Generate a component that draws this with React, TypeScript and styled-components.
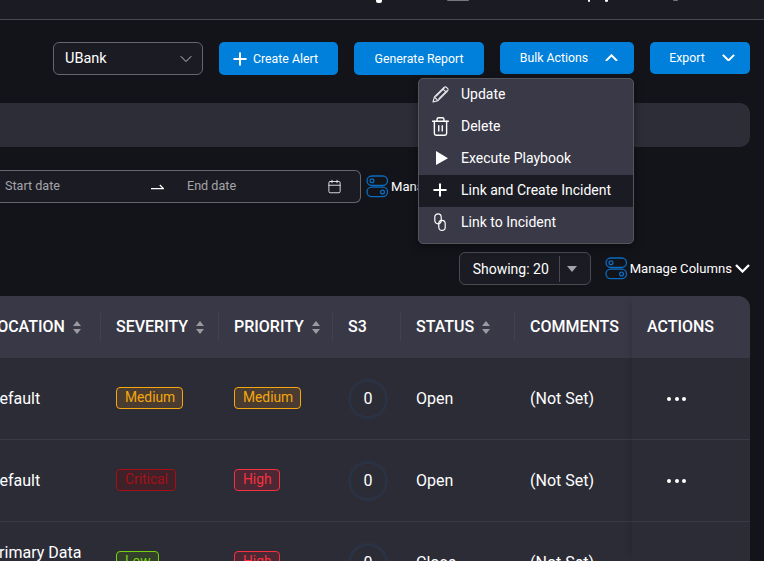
import React from "react";
import styled, { createGlobalStyle } from "styled-components";
import { ChevronDown, Plus, Trash2, Calendar } from "lucide-react";

const GlobalStyle = createGlobalStyle`
  html, body {
    margin: 0;
    padding: 0;
    background: #13141a;
    overflow: hidden;
  }
  * {
    box-sizing: border-box;
  }
`;

const Page = styled.div`
  width: 764px;
  height: 561px;
  overflow: hidden;
  background: #13141a;
  color: #fff;
  font-family: Roboto, "Liberation Sans", sans-serif;
  font-size: 16px;
`;

const TopBar = styled.div`
  height: 20px;
  display: flex;
  align-items: flex-start;
  background: #1b1c23;
  border-bottom: 1px solid #4a4a50;
`;

const TopMark = styled.span<{ $before: number; $width: number; $height: number; $color: string }>`
  width: ${(p) => p.$width}px;
  height: ${(p) => p.$height}px;
  margin-left: ${(p) => p.$before}px;
  background: ${(p) => p.$color};
  border-radius: 0 0 2px 2px;
`;

const Toolbar = styled.div`
  display: flex;
  justify-content: flex-end;
  gap: 16px;
  padding: 22px 14px 0 0;
  height: 83px;
`;

const SelectBox = styled.div`
  width: 150px;
  height: 33px;
  display: flex;
  align-items: center;
  justify-content: space-between;
  padding: 0 6px 0 11px;
  background: #1b1c23;
  border: 1px solid #66666c;
  border-radius: 6px;
  font-size: 14.5px;
`;

const Button = styled.div<{ $width: number; $short?: boolean; $endPad?: number }>`
  width: ${(p) => p.$width}px;
  height: ${(p) => (p.$short ? 32 : 33)}px;
  display: flex;
  align-items: center;
  justify-content: center;
  gap: 3px;
  padding-bottom: ${(p) => (p.$short ? 1 : 0)}px;
  padding-left: ${(p) => (p.$short ? 4 : 0)}px;
  padding-right: ${(p) => p.$endPad ?? 0}px;
  background: #0080da;
  border-radius: 5px;
  font-size: 12.3px;
`;

const ButtonLabel = styled.span`
  margin-right: 14px;
`;

const DropdownWrap = styled.div`
  position: relative;
`;

const Menu = styled.div`
  position: absolute;
  z-index: 5;
  top: 36px;
  right: 0;
  width: 216px;
  padding-bottom: 4px;
  background: #3a3947;
  border: 1px solid #55555e;
  border-radius: 5px;
  box-shadow: 0 3px 10px rgba(0, 0, 0, 0.4);
  overflow: hidden;
`;

const MenuItem = styled.div<{ $active?: boolean }>`
  height: 32px;
  display: flex;
  align-items: center;
  padding-bottom: 2px;
  font-size: 14px;
  background: ${(p) => (p.$active ? "#1b1c23" : "transparent")};
`;

const MenuIcon = styled.span`
  width: 42px;
  display: flex;
  align-items: center;
  justify-content: center;
`;

const Banner = styled.div`
  height: 44px;
  margin-right: 14px;
  background: #2d2d38;
  border-radius: 0 10px 10px 0;
`;

const FilterRow = styled.div`
  display: flex;
  align-items: center;
  height: 33px;
  margin-top: 23px;
`;

const DateRange = styled.div`
  width: 361px;
  height: 33px;
  display: flex;
  align-items: center;
  padding-left: 5px;
  background: #1b1c23;
  border: 1px solid #66666c;
  border-left: none;
  border-radius: 0 6px 6px 0;
  font-size: 12.6px;
  color: #a5a5aa;
`;

const DateText = styled.span<{ $width: number }>`
  width: ${(p) => p.$width}px;
  padding-bottom: 2px;
`;

const ArrowMark = styled.span`
  width: 36px;
  display: flex;
`;

const ToggleLabel = styled.span<{ $before?: number }>`
  display: inline-flex;
  margin-left: ${(p) => p.$before ?? 0}px;
  font-size: 13.1px;
  color: #fff;
`;

const ManageFilters = styled.div`
  display: flex;
  align-items: center;
  gap: 2px;
  margin-left: 5px;
`;

const TableControls = styled.div`
  display: flex;
  justify-content: flex-end;
  align-items: center;
  height: 33px;
  margin-top: 49px;
  padding-right: 14px;
`;

const ShowingBox = styled.div`
  width: 132px;
  height: 33px;
  display: flex;
  align-items: center;
  margin-right: 14px;
  padding-left: 13px;
  border: 1px solid #4a4a50;
  border-radius: 6px;
  background: #1b1c23;
  font-size: 14px;
`;

const ShowingDivider = styled.span`
  width: 1px;
  height: 26px;
  margin: 0 7px 0 10px;
  background: #4a4a50;
`;

const Caret = styled.span`
  width: 0;
  height: 0;
  border-left: 5.5px solid transparent;
  border-right: 5.5px solid transparent;
  border-top: 6px solid #a3a3a8;
`;

const TableShell = styled.div`
  position: relative;
  margin: 11px 14px 0 0;
  height: 265px;
  overflow: hidden;
  background: #2c2c37;
  border-top-right-radius: 12px;
`;

const GridRow = styled.div<{ $head?: boolean }>`
  display: grid;
  grid-template-columns: 127px 118px 114px 68px 114px 117px 118px;
  justify-content: end;
  align-items: center;
  height: ${(p) => (p.$head ? 62 : 82)}px;
  background: ${(p) => (p.$head ? "#393847" : "transparent")};
  border-bottom: ${(p) => (p.$head ? "none" : "1px solid #3a3a46")};
  font-weight: ${(p) => (p.$head ? 500 : 400)};
`;

const Cell = styled.div<{ $divided?: boolean }>`
  position: relative;
  display: flex;
  align-items: center;
  padding-left: 15px;
  line-height: 20px;
  ${(p) =>
    p.$divided
      ? `&::after {
    content: "";
    position: absolute;
    right: 0;
    top: -4px;
    height: 28px;
    width: 1px;
    background: #42414f;
  }`
      : ""}
`;

const SortMark = styled.span`
  display: inline-flex;
  flex-direction: column;
  gap: 3px;
  margin-left: 8px;

  &::before,
  &::after {
    content: "";
    width: 0;
    height: 0;
    border-left: 4.5px solid transparent;
    border-right: 4.5px solid transparent;
  }
  &::before {
    border-bottom: 5px solid #9a9aa0;
  }
  &::after {
    border-top: 5px solid #9a9aa0;
  }
`;

const Badge = styled.span<{ $color: string; $fill: string }>`
  display: inline-block;
  height: 22px;
  margin-bottom: 2px;
  padding: 0 7px 0 8px;
  line-height: 19px;
  font-size: 13.8px;
  color: ${(p) => p.$color};
  background: ${(p) => p.$fill};
  border: 1px solid ${(p) => p.$color};
  border-radius: 4px;
`;

const Ring = styled.span`
  width: 40px;
  height: 40px;
  display: flex;
  align-items: center;
  justify-content: center;
  border: 3px solid #2a3243;
  border-radius: 50%;
  font-size: 16px;
`;

const ActionsShade = styled.div`
  position: absolute;
  top: 0;
  right: 0;
  bottom: 0;
  width: 118px;
  box-shadow: -6px 0 8px -6px rgba(0, 0, 0, 0.2);
  pointer-events: none;
`;

const Dots = styled.span`
  display: flex;
  gap: 3.5px;
  margin-left: 5px;
  padding-left: 15px;
`;

const Dot = styled.span`
  width: 4px;
  height: 4px;
  border-radius: 50%;
  background: #fff;
`;

const Sliders = () => (
  <svg width="23" height="23" viewBox="0 0 23 23" fill="none" stroke="#0b6cc0" strokeWidth="1.3">
    <rect x="1" y="1" width="20.5" height="9.5" rx="4.7" />
    <rect x="1" y="12.2" width="20.5" height="9.5" rx="4.7" />
    <circle cx="6" cy="5.7" r="1.9" />
    <circle cx="16.5" cy="17" r="1.9" />
  </svg>
);

const PencilIcon = () => (
  <svg width="17" height="17" viewBox="0 0 17 17" fill="none" stroke="#e6e6ea" strokeWidth="1.1" strokeLinejoin="round">
    <path d="M1 16L2.4 11L12 1.5C12.8 .8 13.8 .8 14.6 1.5L15.5 2.4C16.2 3.2 16.2 4.2 15.5 5L6 14.6Z" />
    <path d="M2.4 11L6 14.6M4 10.4L12.4 2M6.6 13L14.9 4.7M10.8 2.8L14.2 6.2" />
  </svg>
);

const PlayIcon = () => (
  <svg width="16" height="16" viewBox="0 0 16 16" fill="#fff">
    <path d="M4 1L16 8.2L4 15Z" />
  </svg>
);

const LinkChain = () => (
  <svg width="12" height="18" viewBox="0 0 12 18" fill="none" stroke="#fff" strokeWidth="1.2">
    <rect x="0.8" y="0.8" width="6.4" height="10" rx="3.2" />
    <rect x="4.8" y="7.4" width="6.4" height="10" rx="3.2" />
  </svg>
);

const LongArrow = () => (
  <svg width="13" height="6" viewBox="0 0 13 6" fill="none" stroke="#fff" strokeWidth="1.3">
    <path d="M0 4.6H12.5L8.8 1" />
  </svg>
);

const WideChevron = ({ up, width = 13 }: { up?: boolean; width?: number }) => (
  <svg width={width} height={width * 0.6} viewBox="0 0 15 9" fill="none" stroke="#fff" strokeWidth="2.3">
    <path d={up ? "M1 8L7.5 1.5L14 8" : "M1 1L7.5 7.5L14 1"} />
  </svg>
);

type BadgeData = [string, string, string];

type RowData = {
  location: string;
  severity: BadgeData;
  priority: BadgeData;
  status: string;
};

const medium: BadgeData = ["Medium", "#f5a70d", "#4a3c30"];
const critical: BadgeData = ["Critical", "#a50f16", "#3f2229"];
const high: BadgeData = ["High", "#f8303f", "#4b2833"];
const low: BadgeData = ["Low", "#76d10f", "#33402c"];

const rows: RowData[] = [
  { location: "Default", severity: medium, priority: medium, status: "Open" },
  { location: "Default", severity: critical, priority: high, status: "Open" },
  { location: "Primary Data Center", severity: low, priority: high, status: "Close" },
];

const App = () => (
  <Page>
    <GlobalStyle />
    <TopBar>
      <TopMark $before={376} $width={6} $height={3} $color="#fff" />
      <TopMark $before={65} $width={22} $height={1} $color="#77777c" />
      <TopMark $before={119} $width={2} $height={2} $color="#fff" />
      <TopMark $before={15} $width={3} $height={2} $color="#fff" />
      <TopMark $before={65} $width={5} $height={1} $color="#77777c" />
    </TopBar>
    <Toolbar>
      <SelectBox>
        UBank
        <ChevronDown size={20} strokeWidth={1.1} color="#d5d5d8" />
      </SelectBox>
      <Button $width={119} $endPad={9}>
        <Plus size={20} strokeWidth={2.4} />
        Create Alert
      </Button>
      <Button $width={130}>Generate Report</Button>
      <DropdownWrap>
        <Button $width={134} $short>
          <ButtonLabel>Bulk Actions</ButtonLabel>
          <WideChevron up />
        </Button>
        <Menu>
          <MenuItem>
            <MenuIcon><PencilIcon /></MenuIcon>
            Update
          </MenuItem>
          <MenuItem>
            <MenuIcon><Trash2 size={21} strokeWidth={1.6} /></MenuIcon>
            Delete
          </MenuItem>
          <MenuItem>
            <MenuIcon><PlayIcon /></MenuIcon>
            Execute Playbook
          </MenuItem>
          <MenuItem $active>
            <MenuIcon><Plus size={20} strokeWidth={2.4} /></MenuIcon>
            Link and Create Incident
          </MenuItem>
          <MenuItem>
            <MenuIcon><LinkChain /></MenuIcon>
            Link to Incident
          </MenuItem>
        </Menu>
      </DropdownWrap>
      <Button $width={100} $short>
        <ButtonLabel>Export</ButtonLabel>
        <WideChevron />
      </Button>
    </Toolbar>
    <Banner />
    <FilterRow>
      <DateRange>
        <DateText $width={146}>Start date</DateText>
        <ArrowMark><LongArrow /></ArrowMark>
        <DateText $width={140}>End date</DateText>
        <Calendar size={15} strokeWidth={1.3} color="#fff" />
      </DateRange>
      <ManageFilters>
        <Sliders />
        <ToggleLabel>Manage</ToggleLabel>
      </ManageFilters>
    </FilterRow>
    <TableControls>
      <ShowingBox>
        Showing: 20
        <ShowingDivider />
        <Caret />
      </ShowingBox>
      <Sliders />
      <ToggleLabel $before={2}>Manage Columns</ToggleLabel>
      <ToggleLabel $before={3}><WideChevron width={15} /></ToggleLabel>
    </TableControls>
    <TableShell>
      <GridRow $head>
        <Cell $divided>LOCATION<SortMark /></Cell>
        <Cell $divided>SEVERITY<SortMark /></Cell>
        <Cell $divided>PRIORITY<SortMark /></Cell>
        <Cell $divided>S3</Cell>
        <Cell $divided>STATUS<SortMark /></Cell>
        <Cell>COMMENTS</Cell>
        <Cell>ACTIONS</Cell>
      </GridRow>
      {rows.map((row, i) => (
        <GridRow key={i}>
          <Cell>{row.location}</Cell>
          <Cell>
            <Badge $color={row.severity[1]} $fill={row.severity[2]}>{row.severity[0]}</Badge>
          </Cell>
          <Cell>
            <Badge $color={row.priority[1]} $fill={row.priority[2]}>{row.priority[0]}</Badge>
          </Cell>
          <Cell><Ring>0</Ring></Cell>
          <Cell>{row.status}</Cell>
          <Cell>(Not Set)</Cell>
          <Cell>
            <Dots><Dot /><Dot /><Dot /></Dots>
          </Cell>
        </GridRow>
      ))}
      <ActionsShade />
    </TableShell>
  </Page>
);

export default App;
